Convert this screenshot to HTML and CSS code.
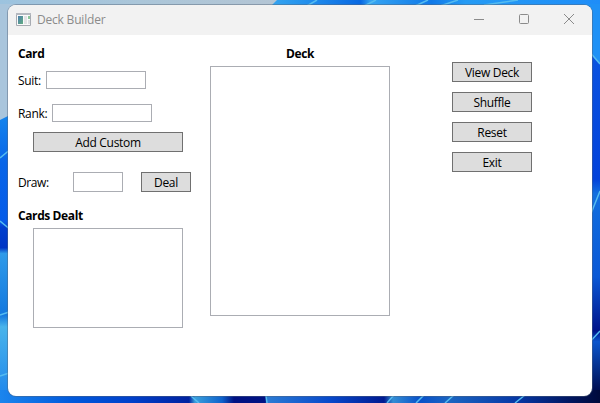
FILE: index.html
```html
<!DOCTYPE html>
<html lang="en">
<head>
<meta charset="utf-8">
<title>Deck Builder</title>
<link rel="stylesheet" href="styles.css">
</head>
<body>
<svg class="wallpaper" viewBox="0 0 600 403" aria-hidden="true">
  <defs>
    <linearGradient id="sky"><stop offset="0" stop-color="#9cc3df"/><stop offset=".5" stop-color="#abc6d9"/><stop offset="1" stop-color="#b4c5d4"/></linearGradient>
    <linearGradient id="top"><stop offset="0" stop-color="#39a9f0"/><stop offset=".12" stop-color="#2492ed"/><stop offset=".29" stop-color="#0868e2"/><stop offset=".32" stop-color="#35a4f2"/><stop offset=".5" stop-color="#1079e8"/><stop offset=".6" stop-color="#259bf4"/><stop offset="1" stop-color="#1e8df8"/></linearGradient>
    <linearGradient id="bottom"><stop offset="0" stop-color="#1b85ed"/><stop offset=".12" stop-color="#0059dc"/><stop offset=".22" stop-color="#0040ca"/><stop offset=".315" stop-color="#0022a0"/><stop offset=".325" stop-color="#3a9fdc"/><stop offset=".37" stop-color="#0d62cc"/><stop offset=".39" stop-color="#001283"/><stop offset=".442" stop-color="#001283"/><stop offset=".445" stop-color="#2b7bd4"/><stop offset=".55" stop-color="#0749cb"/><stop offset=".64" stop-color="#001a91"/><stop offset=".655" stop-color="#338dd4"/><stop offset=".7" stop-color="#0851ca"/><stop offset=".75" stop-color="#1b65c1"/><stop offset=".86" stop-color="#0638a6"/><stop offset=".95" stop-color="#001660"/><stop offset="1" stop-color="#000a3b"/></linearGradient>
    <linearGradient id="left" x2="0" y2="1"><stop offset="0" stop-color="#1588ee"/><stop offset=".18" stop-color="#0865e8"/><stop offset=".38" stop-color="#055be9"/><stop offset=".4" stop-color="#003fce"/><stop offset=".47" stop-color="#0035c5"/><stop offset=".49" stop-color="#2f9be9"/><stop offset=".7" stop-color="#1378df"/><stop offset=".74" stop-color="#49b4eb"/><stop offset="1" stop-color="#1c83ec"/></linearGradient>
    <linearGradient id="right" x2="0" y2="1"><stop offset="0" stop-color="#0b55e1"/><stop offset=".38" stop-color="#0342da"/><stop offset=".42" stop-color="#126fdf"/><stop offset=".65" stop-color="#0a58d6"/><stop offset=".8" stop-color="#00138a"/><stop offset=".83" stop-color="#0b55cd"/><stop offset=".96" stop-color="#001158"/><stop offset="1" stop-color="#000a3b"/></linearGradient>
  </defs>
  <path fill="url(#sky)" d="M0 0h280v10H0z"/>
  <path fill="#a9c5dc" d="M0 4h20v120H0z"/>
  <path fill="url(#top)" d="M277 0h323v14H263z"/>
  <path fill="#1f91f6" d="M580 4h20v62l-20-24z"/>
  <path fill="url(#left)" d="M0 120l20-10v293H0z"/>
  <path fill="url(#right)" d="M580 42l20 22v339h-20z"/>
  <path fill="url(#bottom)" d="M0 390h600v13H0z"/>
  <g class="streaks">
    <path d="M305 7l12-7M362 7l14-7M415 6l13-6M440 6l18-6M484 5l34-5"/>
    <path d="M0 158l12-10M0 221l12 10M0 315l12-4M0 376l12-4"/>
    <path d="M588 50l12 14M590 216l10-25M588 344l12-13"/>
    <path d="M266 396l1 7M387 403l7-8M416 403l8-8M445 403l9-8M515 403l10-8M191 396l8 7"/>
  </g>
</svg>
<main class="window">
  <header class="titlebar">
    <svg class="app-icon" viewBox="0 0 16 14" aria-hidden="true">
      <defs><linearGradient id="pane" x2="1" y2="1"><stop stop-color="#4b7fac"/><stop offset="1" stop-color="#63ad82"/></linearGradient></defs>
      <path fill="#fafafa" stroke="#a7abb2" d="M.5.5h14v12H.5z"/>
      <path fill="#b5b9c0" d="M0 0h15v2H0z"/>
      <path fill="url(#pane)" d="M2 3h5v8H2z"/>
      <path fill="#e2e3e5" d="M8 3h3v8H8z"/>
      <path fill="#8cc79b" d="M12 3h2v3h-2z"/>
      <path fill="#dcdee1" d="M12 7h2v4h-2z"/>
    </svg>
    <h1 class="title">Deck Builder</h1>
    <div class="controls">
      <svg viewBox="0 0 12 12" aria-label="Minimize"><path d="M1 6.5h10"/></svg>
      <svg viewBox="0 0 12 12" aria-label="Maximize"><rect x="1.5" y="1.5" width="9" height="9" rx="1"/></svg>
      <svg viewBox="0 0 12 12" aria-label="Close"><path d="M1 1l10 10M11 1L1 11"/></svg>
    </div>
  </header>
  <div class="content">
    <section class="entry">
      <h2 class="heading">Card</h2>
      <label class="field suit"><span>Suit:</span><input type="text"></label>
      <label class="field rank"><span>Rank:</span><input type="text"></label>
      <button class="btn add">Add Custom</button>
      <div class="draw">
        <label class="draw-label" for="draw">Draw:</label>
        <input id="draw" type="text">
        <button class="btn deal">Deal</button>
      </div>
      <h2 class="heading dealt-heading">Cards Dealt</h2>
      <div class="list dealt"></div>
    </section>
    <section class="deck">
      <h2 class="heading">Deck</h2>
      <div class="list deck-list"></div>
    </section>
    <nav class="actions">
      <button class="btn view">View Deck</button>
      <button class="btn">Shuffle</button>
      <button class="btn">Reset</button>
      <button class="btn">Exit</button>
    </nav>
  </div>
</main>
</body>
</html>
```
FILE: styles.css
```css
* { box-sizing: border-box; }
body {
  margin: 0;
  width: 600px;
  height: 403px;
  padding: 5px 8px 7px;
  overflow: hidden;
  font: 12px/16px "Open Sans", "Noto Sans", sans-serif;
  letter-spacing: -0.3px;
  color: #000;
}
.wallpaper { position: absolute; inset: 0; width: 600px; height: 403px; z-index: -1; }
.streaks { fill: none; stroke: #55bcf0; stroke-width: 1.5; }
.window {
  height: 391px;
  border-radius: 8px;
  overflow: hidden;
  background: #fff;
  box-shadow: 0 0 0 1px rgba(85, 100, 120, .45);
}
.titlebar {
  display: flex;
  align-items: center;
  height: 30px;
  padding-left: 8px;
  background: #f2f2f2;
  color: #8b8b8b;
}
.app-icon { width: 16px; height: 14px; margin: -1px 5px 0 0; }
.title { margin: 0; font-size: 12px; font-weight: 400; letter-spacing: -0.2px; }
.controls { display: flex; gap: 33px; margin: -2px 17px 0 auto; }
.controls svg { width: 12px; height: 12px; fill: none; stroke: #8b8b8b; }
.content {
  display: grid;
  grid-template-columns: 192px 242px 80px;
  padding: 11px 0 0 10px;
}
.heading { margin: 0; font-size: 12px; font-weight: 700; line-height: 16px; letter-spacing: -0.4px; }
.field { display: flex; align-items: center; height: 18px; }
.field span { width: 28px; padding-top: 2px; white-space: nowrap; }
.field.rank span { width: 34px; }
.suit { margin-top: 9px; }
.rank { margin-top: 15px; }
input {
  width: 100px;
  height: 18px;
  padding: 0 2px;
  border: 1px solid #abadb3;
  background: #fff;
  font: inherit;
}
.btn {
  display: block;
  height: 20px;
  padding: 1px 0 0;
  border: 1px solid #707070;
  border-radius: 0;
  background: #ddd;
  color: #000;
  font: inherit;
  letter-spacing: inherit;
  line-height: 17px;
}
.add { width: 150px; margin: 10px 0 0 15px; }
.draw { display: flex; align-items: center; height: 20px; margin-top: 20px; }
.draw-label { width: 55px; padding-top: 1px; letter-spacing: -0.4px; }
.draw input { width: 50px; height: 20px; margin-right: 18px; }
.deal { width: 50px; }
.dealt-heading { margin-top: 16px; }
.list { border: 1px solid #abadb3; background: #fff; }
.dealt { width: 150px; height: 100px; margin: 4px 0 0 15px; }
.deck { width: 180px; }
.deck .heading { text-align: center; }
.deck-list { height: 250px; margin-top: 4px; }
.actions { display: grid; gap: 10px; align-content: start; padding-top: 16px; }
```
